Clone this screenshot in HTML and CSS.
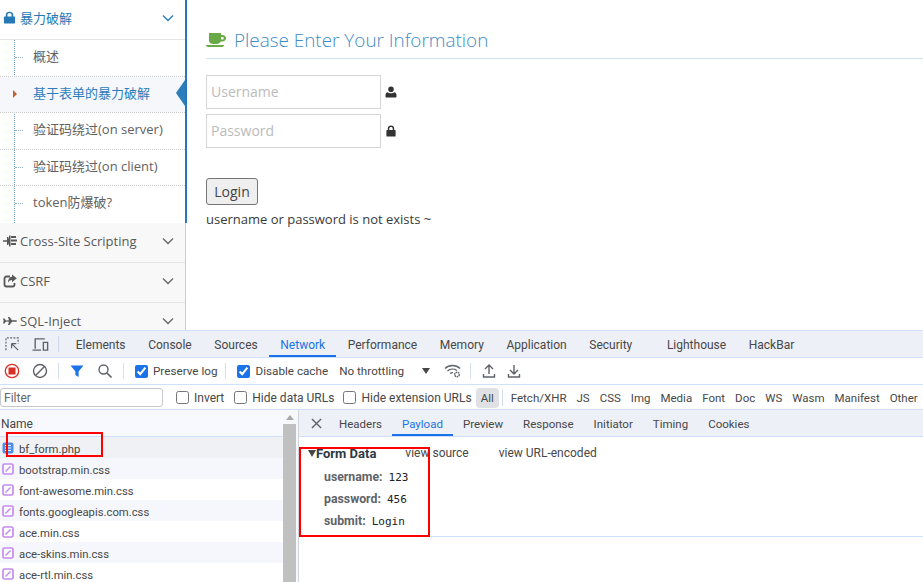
FILE: index.html
```html
<!DOCTYPE html>
<html lang="zh">
<head>
<meta charset="utf-8">
<title>Brute force form</title>
<link rel="stylesheet" href="styles.css">
</head>
<body>
<div class="page">
  <aside class="sidebar">
    <div class="nav-open">
      <div class="nav-head first">
        <svg class="nav-icon lock" viewBox="0 0 14 14"><path fill="#2679b5" d="M3 6V4.200C3 2 4.800.8 7 .8s4 1.200 4 3.400V6h1.300c.5 0 .7.300.7.700v6c0 .5-.2.700-.7.700H1.700c-.5 0-.7-.2-.7-.7v-6c0-.4.200-.7.700-.7zm1.800 0h4.400V4.200C9.200 3 8.200 2.500 7 2.500s-2.200.5-2.200 1.700z"/></svg>
        <span class="nav-label blue">暴力破解</span>
        <svg class="chev" viewBox="0 0 12 8"><path d="M1 1.500l5 5 5-5" fill="none" stroke="#2679b5" stroke-width="1.300"/></svg>
      </div>
      <ul class="subnav">
        <li class="sub-item">概述</li>
        <li class="sub-item active">基于表单的暴力破解<i class="caret"></i><i class="notch"></i></li>
        <li class="sub-item">验证码绕过(on server)</li>
        <li class="sub-item">验证码绕过(on client)</li>
        <li class="sub-item">token防爆破?</li>
      </ul>
    </div>
    <div class="nav-closed">
      <div class="nav-head">
        <svg class="nav-icon" viewBox="0 0 14 14"><path fill="#585858" d="M0 6.200h4V3h1.500v1.500H6V1.500h1.500v11H6V9.500h-.5V11H4V7.800H0zM8 2h5v2H8zm0 3.500h6v2H8zm0 3.500h5v2H8z"/></svg>
        <span class="nav-label">Cross-Site Scripting</span>
        <svg class="chev" viewBox="0 0 12 8"><path d="M1 1.500l5 5 5-5" fill="none" stroke="#666" stroke-width="1.300"/></svg>
      </div>
      <div class="nav-head">
        <svg class="nav-icon" viewBox="0 0 14 14"><path fill="none" stroke="#585858" stroke-width="1.800" d="M7 2.500H3.500C2.300 2.500 1.500 3.300 1.500 4.500v6c0 1.200.8 2 2 2h6c1.200 0 2-.8 2-2V9"/><path fill="#585858" d="M9 .5l4.800 3.800L9 8.200V6C7 6 6 6.800 5 8.800 5 5.500 6.500 3 9 2.800z"/></svg>
        <span class="nav-label">CSRF</span>
        <svg class="chev" viewBox="0 0 12 8"><path d="M1 1.500l5 5 5-5" fill="none" stroke="#666" stroke-width="1.300"/></svg>
      </div>
      <div class="nav-head">
        <svg class="nav-icon" viewBox="0 0 14 14"><path fill="#585858" d="M0 4.500l1.500 0 1.500 2L6 6.200 5 3h1.500l2.500 3.200h3.500c1 0 1.500.4 1.500.8s-.5.800-1.500.8H9L6.500 11H5l1-3.200-3-.3-1.500 2H0l.7-2.500z"/></svg>
        <span class="nav-label">SQL-Inject</span>
        <svg class="chev" viewBox="0 0 12 8"><path d="M1 1.500l5 5 5-5" fill="none" stroke="#666" stroke-width="1.300"/></svg>
      </div>
    </div>
  </aside>
  <main class="content">
    <h1 class="title">
      <svg class="cup" viewBox="0 0 20 16"><path fill="#69aa46" d="M3 1h12v2h1.500C18.500 3 20 4.300 20 6.200S18.500 9.500 16.500 9.500h-1.700C14 11 12.500 12 11 12H7C5 12 3 10.500 3 8.500zm12 4v2.500h1.300c.8 0 1.500-.5 1.500-1.300S17.100 5 16.300 5zM0 13h18c0 1.200-1 2-2 2H2c-1 0-2-.8-2-2z"/></svg>
      <span>Please Enter Your Information</span>
    </h1>
    <form class="login">
      <div class="field">
        <input class="input" type="text" placeholder="Username">
        <svg class="field-icon" viewBox="0 0 12 12"><path fill="#333" d="M6 .5a2.800 2.800 0 1 1 0 5.600A2.800 2.800 0 0 1 6 .5zM2.500 6.200C3.500 7 4.600 7.300 6 7.300s2.500-.3 3.500-1.100c1.200.3 2 1.400 2 3v1.300c0 .7-.5 1-1 1h-9c-.5 0-1-.3-1-1V9.200c0-1.600.8-2.700 2-3z"/></svg>
      </div>
      <div class="field">
        <input class="input" type="password" placeholder="Password">
        <svg class="field-icon" viewBox="0 0 12 12"><path fill="#333" d="M2.800 5V3.600C2.800 1.700 4.200.5 6 .5s3.200 1.200 3.200 3.100V5H10c.4 0 .6.300.6.600v5.300c0 .4-.2.600-.6.600H2c-.4 0-.6-.2-.6-.6V5.600c0-.3.200-.6.600-.6zm1.500 0h3.400V3.600C7.700 2.600 7 2 6 2s-1.700.6-1.700 1.600z"/></svg>
      </div>
      <button class="login-btn" type="button">Login</button>
    </form>
    <p class="message">username or password is not exists ~</p>
  </main>
</div>

<section class="devtools">
  <div class="tabbar">
    <svg class="top-icon" viewBox="0 0 16 16"><path fill="none" stroke="#5f6368" stroke-width="1.300" stroke-dasharray="2 1.500" d="M1 14V1h13v6"/><path fill="none" stroke="#5f6368" stroke-width="1.300" d="M7 7h5M7 7v5M7 7l7 7"/></svg>
    <svg class="top-icon device" viewBox="0 0 16 16"><path fill="none" stroke="#5f6368" stroke-width="1.300" d="M3 12V2.700h9M10.700 6h4v7.300h-4zM.5 13.300h8"/></svg>
    <i class="tab-sep"></i>
    <nav class="tabs">
      <span class="tab">Elements</span>
      <span class="tab">Console</span>
      <span class="tab">Sources</span>
      <span class="tab on">Network</span>
      <span class="tab">Performance</span>
      <span class="tab">Memory</span>
      <span class="tab">Application</span>
      <span class="tab">Security</span>
      <span class="tab extra">Lighthouse</span>
      <span class="tab">HackBar</span>
    </nav>
  </div>

  <div class="toolbar">
    <svg class="tool rec" viewBox="0 0 16 16"><circle cx="8" cy="8" r="6.700" fill="none" stroke="#d93025" stroke-width="1.300"/><rect x="4.500" y="4.500" width="7" height="7" rx=".5" fill="#d93025"/></svg>
    <svg class="tool" viewBox="0 0 16 16"><circle cx="8" cy="8" r="6.500" fill="none" stroke="#5f6368" stroke-width="1.400"/><path d="M3.500 12.500l9-9" stroke="#5f6368" stroke-width="1.400"/></svg>
    <i class="sep"></i>
    <svg class="tool" viewBox="0 0 16 16"><path fill="#1a73e8" d="M1.500 2.500h13L9.600 8.500V14l-3.200-2V8.500z"/></svg>
    <svg class="tool" viewBox="0 0 16 16"><circle cx="6.500" cy="6.500" r="4.500" fill="none" stroke="#5f6368" stroke-width="1.400"/><path d="M10 10l4.500 4.500" stroke="#5f6368" stroke-width="1.700"/></svg>
    <i class="sep"></i>
    <label class="check"><input type="checkbox" checked>Preserve log</label>
    <i class="sep"></i>
    <label class="check"><input type="checkbox" checked>Disable cache</label>
    <span class="throttle">No throttling</span>
    <i class="arrow-down"></i>
    <svg class="tool wifi" viewBox="0 0 18 16"><path fill="none" stroke="#5f6368" stroke-width="1.300" d="M1 5.500C5 1.500 12 1.500 16 5.500M3.500 8C6 5.800 10 5.500 13 7.500M6 10.500c1-.8 2-1 3-.9"/><circle cx="13" cy="11.500" r="2.300" fill="none" stroke="#5f6368" stroke-width="1.500" stroke-dasharray="1.500 .6"/></svg>
    <i class="sep"></i>
    <svg class="tool upload" viewBox="0 0 16 16"><path fill="none" stroke="#5f6368" stroke-width="1.400" d="M8 11V2.500M4 6l4-4 4 4M2.500 11v3h11v-3"/></svg>
    <svg class="tool" viewBox="0 0 16 16"><path fill="none" stroke="#5f6368" stroke-width="1.400" d="M8 2v8.500M4 7l4 4 4-4M2.500 11v3h11v-3"/></svg>
  </div>

  <div class="filterbar">
    <input class="filter" type="text" placeholder="Filter">
    <label class="check invert"><input type="checkbox">Invert</label>
    <label class="check"><input type="checkbox">Hide data URLs</label>
    <label class="check"><input type="checkbox">Hide extension URLs</label>
    <span class="chip all">All</span>
    <i class="sep short"></i>
    <span class="chip">Fetch/XHR</span>
    <span class="chip">JS</span>
    <span class="chip">CSS</span>
    <span class="chip">Img</span>
    <span class="chip">Media</span>
    <span class="chip">Font</span>
    <span class="chip">Doc</span>
    <span class="chip">WS</span>
    <span class="chip">Wasm</span>
    <span class="chip">Manifest</span>
    <span class="chip">Other</span>
  </div>

  <div class="panes">
    <div class="requests">
      <div class="req-list">
        <div class="req-head">Name</div>
        <div class="req selected"><svg class="file" viewBox="0 0 12 12"><rect x=".5" y=".5" width="11" height="11" rx="2" fill="#4d90ea"/><path d="M3 3.500h6M3 6h6M3 8.500h6" stroke="#fff" stroke-width="1.100"/></svg>bf_form.php</div>
        <div class="req"><svg class="file" viewBox="0 0 12 12"><rect x="1" y="1" width="10" height="10" rx="1.500" fill="#fff" stroke="#c58af0" stroke-width="1.700"/><path d="M3.500 8.500L8.500 3.500" stroke="#c58af0" stroke-width="1.500"/></svg>bootstrap.min.css</div>
        <div class="req"><svg class="file" viewBox="0 0 12 12"><rect x="1" y="1" width="10" height="10" rx="1.500" fill="#fff" stroke="#c58af0" stroke-width="1.700"/><path d="M3.500 8.500L8.500 3.500" stroke="#c58af0" stroke-width="1.500"/></svg>font-awesome.min.css</div>
        <div class="req"><svg class="file" viewBox="0 0 12 12"><rect x="1" y="1" width="10" height="10" rx="1.500" fill="#fff" stroke="#c58af0" stroke-width="1.700"/><path d="M3.500 8.500L8.500 3.500" stroke="#c58af0" stroke-width="1.500"/></svg>fonts.googleapis.com.css</div>
        <div class="req"><svg class="file" viewBox="0 0 12 12"><rect x="1" y="1" width="10" height="10" rx="1.500" fill="#fff" stroke="#c58af0" stroke-width="1.700"/><path d="M3.500 8.500L8.500 3.500" stroke="#c58af0" stroke-width="1.500"/></svg>ace.min.css</div>
        <div class="req"><svg class="file" viewBox="0 0 12 12"><rect x="1" y="1" width="10" height="10" rx="1.500" fill="#fff" stroke="#c58af0" stroke-width="1.700"/><path d="M3.500 8.500L8.500 3.500" stroke="#c58af0" stroke-width="1.500"/></svg>ace-skins.min.css</div>
        <div class="req"><svg class="file" viewBox="0 0 12 12"><rect x="1" y="1" width="10" height="10" rx="1.500" fill="#fff" stroke="#c58af0" stroke-width="1.700"/><path d="M3.500 8.500L8.500 3.500" stroke="#c58af0" stroke-width="1.500"/></svg>ace-rtl.min.css</div>
      </div>
      <div class="scrollbar"><i class="scroll-up"></i><i class="thumb"></i></div>
      <i class="mark mark-req"></i>
    </div>
    <div class="details">
      <div class="detail-tabs">
        <svg class="close" viewBox="0 0 12 12"><path d="M1 1l10 10M11 1L1 11" stroke="#5f6368" stroke-width="1.500"/></svg>
        <span class="dtab">Headers</span>
        <span class="dtab on">Payload</span>
        <span class="dtab">Preview</span>
        <span class="dtab">Response</span>
        <span class="dtab">Initiator</span>
        <span class="dtab">Timing</span>
        <span class="dtab">Cookies</span>
      </div>
      <div class="payload">
        <div class="form-head">
          <i class="tri"></i><b class="form-title">Form Data</b>
          <span class="view first-view">view source</span>
          <span class="view">view URL-encoded</span>
        </div>
        <div class="kv"><b>username:</b><code>123</code></div>
        <div class="kv"><b>password:</b><code>456</code></div>
        <div class="kv"><b>submit:</b><code>Login</code></div>
        <i class="mark mark-form"></i>
      </div>
    </div>
  </div>
</section>
</body>
</html>
```
FILE: styles.css
```css
* { box-sizing: border-box; }
html, body { margin: 0; padding: 0; }
body {
  width: 923px;
  height: 582px;
  overflow: hidden;
  background: #fff;
  font-family: "Open Sans", "Noto Sans CJK SC", sans-serif;
  color: #393939;
}
ul { margin: 0; padding: 0; list-style: none; }
i { display: block; }

/* page */
.page { display: flex; height: 330px; overflow: hidden; }
.sidebar { width: 187px; flex: none; font-size: 13px; }
.nav-open { border-right: 2px solid #2679b5; width: 187px; background: #fff; }
.nav-closed { width: 186px; background: #f8f8f8; border-right: 1px solid #ccc; height: 108px; }
.nav-head {
  display: flex;
  align-items: center;
  height: 40px;
  padding: 0 11px 2px 3px;
  border-bottom: 1px solid #e5e5e5;
}
.nav-head.first { height: 40px; padding-bottom: 4px; }
.nav-icon { width: 14px; height: 14px; flex: none; margin-right: 3px; }
.nav-icon.lock { width: 13px; height: 15px; margin-right: 4px; }
.nav-label { flex: 1; color: #585858; white-space: nowrap; }
.nav-label.blue { color: #2679b5; }
.chev { width: 12px; height: 8px; flex: none; }
.subnav { position: relative; }
.subnav::before {
  content: "";
  position: absolute;
  left: 14px;
  top: 0;
  bottom: 0;
  border-left: 1px dotted #6f9fc8;
}
.sub-item {
  position: relative;
  height: 36.6px;
  line-height: 33px;
  padding-left: 33px;
  color: #616161;
  border-bottom: 1px dotted #ccc;
  white-space: nowrap;
}
.sub-item:first-child { line-height: 32px; }
.sub-item::before {
  content: "";
  position: absolute;
  left: 15px;
  top: 17px;
  width: 8px;
  border-top: 1px dotted #8eb0cd;
}
.sub-item:last-child { border-bottom: 0; }
.sub-item.active { color: #2b7dbc; background: #f5f7fa; }
.sub-item.active::before { display: none; }
.caret {
  position: absolute;
  left: 13px;
  top: 13px;
  border-left: 4px solid #c86139;
  border-top: 4px solid transparent;
  border-bottom: 4px solid transparent;
}
.notch {
  position: absolute;
  right: 0;
  top: 3px;
  border-right: 9px solid #2b7dbc;
  border-top: 13px solid transparent;
  border-bottom: 13px solid transparent;
}

.content { flex: 1; padding: 0 0 0 19px; min-width: 0; }
.title {
  display: flex;
  align-items: center;
  gap: 8px;
  height: 59px;
  margin: 0;
  padding-top: 22px;
  border-bottom: 1px solid #d5e3ef;
  font-size: 18.900px;
  font-weight: 300;
  color: #3f8cc6;
  white-space: nowrap;
}
.cup { width: 20px; height: 16px; flex: none; }
.login { margin-top: 16px; }
.field { display: flex; align-items: center; gap: 4px; height: 34px; margin-bottom: 5px; }
.input {
  width: 175px;
  height: 34px;
  padding: 0 4px 2px;
  border: 1px solid #d5d5d5;
  background: #fff;
  font: 14px "Open Sans", sans-serif;
  outline: 0;
}
.input::placeholder { color: #bbb; opacity: 1; }
.field-icon { width: 12px; height: 12px; flex: none; }
.login-btn {
  display: block;
  width: 52px;
  height: 27px;
  margin-top: 30px;
  padding: 0;
  border: 1px solid #767676;
  border-radius: 3px;
  background: #efefef;
  color: #444;
  font: 14px "Open Sans", sans-serif;
}
.message { margin: 5px 0 0; font-size: 13px; line-height: 18px; color: #393939; }

/* devtools */
.devtools { height: 252px; font-family: Roboto, sans-serif; font-size: 12px; color: #474747; display: flex; flex-direction: column; }
.tabbar {
  display: flex;
  align-items: center;
  height: 28px;
  background: #edf0f7;
  border-top: 1px solid #cfe0fa;
  border-bottom: 1px solid #cfe0fa;
  padding-left: 5px;
}
.top-icon { width: 15px; height: 15px; flex: none; }
.top-icon.device { margin-left: 12px; width: 17px; height: 17px; }
.tab-sep { width: 1px; height: 16px; background: #cfd8e8; margin-left: 9px; }
.tabs { display: flex; height: 26px; margin-left: 5.500px; }
.tab { padding: 0 11.300px; line-height: 28px; white-space: nowrap; }
.tab.on { color: #1a73e8; border-bottom: 2px solid #1a73e8; }
.tab.extra { margin-left: 12px; }

.toolbar {
  display: flex;
  align-items: center;
  height: 27px;
  padding-left: 4px;
  font-size: 11.700px;
  border-bottom: 1px solid #cfe0fa;
  white-space: nowrap;
}
.tool { width: 16px; height: 16px; flex: none; margin-right: 12px; }
.tool.wifi { width: 18px; margin-left: 14px; margin-right: 10px; }
.tool.upload { margin-right: 9px; }
.sep { width: 1px; height: 16px; background: #d6dfee; flex: none; margin: 0 10px 0 -2px; }
.check { display: flex; align-items: center; white-space: nowrap; margin-right: 9px; }
.check input { width: 13px; height: 13px; margin: 0 5px 0 0; accent-color: #1a73e8; }
.toolbar .check { margin: 0 10px 0 1px; }
.throttle { margin-left: 1px; }
.arrow-down {
  margin-left: 18px;
  border-top: 6px solid #474747;
  border-left: 4.500px solid transparent;
  border-right: 4.500px solid transparent;
}
.filterbar {
  display: flex;
  align-items: center;
  height: 25px;
  padding-top: 1px;
  border-bottom: 1px solid #cfe0fa;
  white-space: nowrap;
}
.filter {
  width: 163px;
  height: 19px;
  margin-right: 13px;
  padding: 1px 3px 0;
  border: 1px solid #c5c8cc;
  border-radius: 3px;
  font: 12px Roboto, sans-serif;
  outline: 0;
}
.filter::placeholder { color: #666; opacity: 1; }
.check.invert { margin-right: 10px; }
.chip { padding: 0 4px; font-size: 11.500px; line-height: 20px; border-radius: 4px; margin-right: 2px; }
.chip.all { background: #dfe1e5; margin-left: -5px; padding: 0 5px; }
.sep.short { margin: 0 4px 0 1px; }

.panes { flex: 1; display: flex; min-height: 0; }
.requests { position: relative; display: flex; width: 299px; flex: none; border-right: 1px solid #d0d4da; }
.req-list { width: 283px; flex: none; font-size: 11.300px; }
.req-head { height: 27px; line-height: 28px; padding-left: 1px; background: #f7f9fe; border-bottom: 1px solid #cfe0fa; font-size: 12px; }
.req { display: flex; align-items: center; height: 21px; padding: 3px 0 0 2px; white-space: nowrap; }
.req:nth-child(odd) { background: #f5f7fc; }
.req.selected { background: #f0f1f4; }
.file { width: 12px; height: 12px; flex: none; margin: -2px 5px 0 0; }
.scrollbar { width: 15px; flex: none; background: #f7f8fc; padding-right: 2px; }
.scroll-up {
  margin: 5px auto 4px;
  width: 0;
  border-bottom: 5px solid #a8a8a8;
  border-left: 4px solid transparent;
  border-right: 4px solid transparent;
}
.thumb { height: 160px; background: #c0c0c0; }
.mark { position: absolute; border: 2px solid #f00; }
.mark-req { left: 6px; top: 22px; width: 97px; height: 25px; }

.details { flex: 1; min-width: 0; }
.detail-tabs {
  display: flex;
  align-items: center;
  height: 27px;
  background: #edf0f7;
  border-bottom: 1px solid #cfe0fa;
  padding-left: 12px;
  font-size: 11.500px;
}
.close { width: 11px; height: 11px; flex: none; margin-right: 7px; }
.dtab { padding: 0 10px; line-height: 28px; height: 26px; white-space: nowrap; }
.dtab.on { color: #1a73e8; border-bottom: 2px solid #1a73e8; }
.payload { position: relative; height: 100px; border-bottom: 1px solid #cfe0fa; padding-top: 7px; }
.form-head { display: flex; align-items: center; height: 18px; }
.tri {
  margin-left: 9px;
  border-top: 7px solid #474747;
  border-left: 4px solid transparent;
  border-right: 4px solid transparent;
}
.form-title { margin-right: 29px; font-size: 13px; font-weight: 700; color: #303942; }
.view { margin-right: 30px; }
.kv { display: flex; align-items: center; height: 22px; padding-left: 25px; }
.kv:nth-of-type(2) { margin-top: 4px; }
.kv b { font-size: 12.300px; font-weight: 700; color: #5f6368; margin-right: 6px; }
.kv code { font: 11px "DejaVu Sans Mono", monospace; color: #202124; }
.mark-form { left: 0; top: 10px; width: 131px; height: 90px; }
```
